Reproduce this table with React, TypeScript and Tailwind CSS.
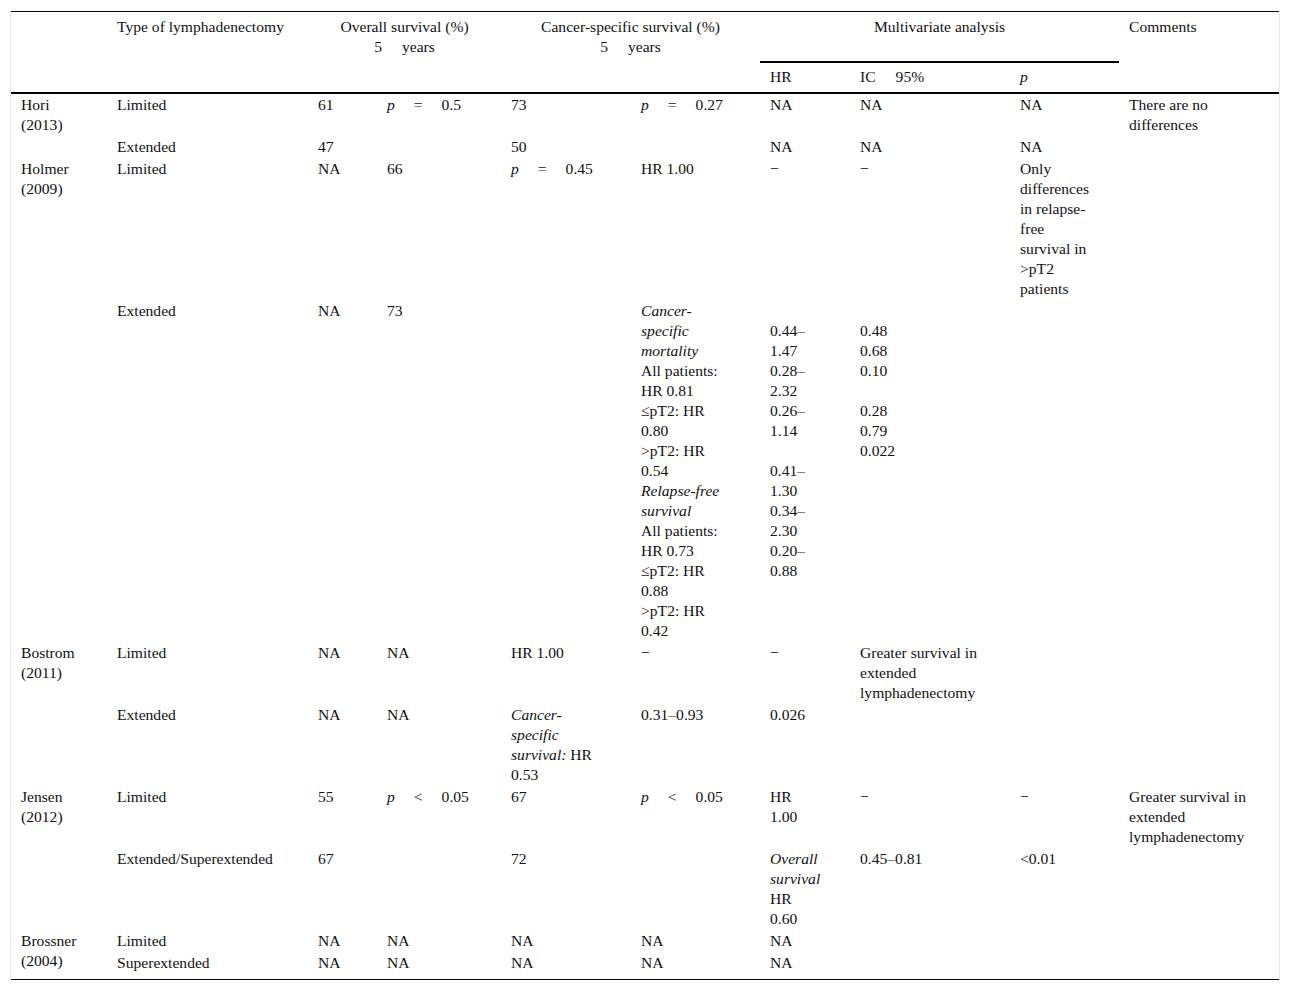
import React from "react";

// p = 0.5 style inline formula, wide spacing like the source
const Eq = ({ op, v }: { op: string; v: string }) => (
  <span className="whitespace-nowrap">
    <i>p</i>
    <span className="ml-[19px]">{op}</span>
    <span className="ml-[19px]">{v}</span>
  </span>
);

const Lines = ({ items }: { items: React.ReactNode[] }) => (
  <>
    {items.map((o, i) => (
      <div key={i} className="h-[20px]">
        {o}
      </div>
    ))}
  </>
);

const td = "align-top px-[10px] py-[1px] whitespace-nowrap";
const tdLast = "align-top px-[10px] pt-[1px] pb-[6px] whitespace-nowrap";
const th1 = "align-top px-[10px] pt-[5px] pb-[4px] font-normal whitespace-nowrap border-b-2 border-black";
const th2 = "align-top text-left px-[10px] pt-[4px] pb-[5px] font-normal whitespace-nowrap border-b-2 border-black";

const Cell = ({ children, last, rowSpan }: { children?: React.ReactNode; last?: boolean; rowSpan?: number }) => (
  <td rowSpan={rowSpan} className={last ? tdLast : td}>
    {children}
  </td>
);

export default function App() {
  return (
    <div className="w-full bg-white pt-[11px] px-[10px] pb-[10px] text-[#111] text-[15.6px] leading-[20px] font-['Liberation_Serif',serif]">
      <div className="border-l border-r border-[#e6e6e6]">
        <table className="w-[1268px] table-fixed border-separate border-spacing-0 border-t border-b border-black">
          <colgroup>
            <col className="w-[96px]" />
            <col className="w-[201px]" />
            <col className="w-[69px]" />
            <col className="w-[124px]" />
            <col className="w-[130px]" />
            <col className="w-[129px]" />
            <col className="w-[90px]" />
            <col className="w-[160px]" />
            <col className="w-[109px]" />
            <col className="w-[160px]" />
          </colgroup>
          <thead>
            <tr>
              <th rowSpan={2} className={th1}></th>
              <th rowSpan={2} className={th1 + " text-left"}>Type of lymphadenectomy</th>
              <th rowSpan={2} colSpan={2} className={th1 + " text-center"}>
                <div>Overall survival (%)</div>
                <div>
                  5<span className="ml-[20px]">years</span>
                </div>
              </th>
              <th rowSpan={2} colSpan={2} className={th1 + " text-center"}>
                <div>Cancer-specific survival (%)</div>
                <div>
                  5<span className="ml-[20px]">years</span>
                </div>
              </th>
              <th colSpan={3} className="align-top text-center px-[10px] pt-[5px] pb-[24px] font-normal whitespace-nowrap border-b-2 border-black">
                Multivariate analysis
              </th>
              <th rowSpan={2} className={th1 + " text-left"}>Comments</th>
            </tr>
            <tr>
              <th className={th2}>HR</th>
              <th className={th2}>
                IC<span className="ml-[20px]">95%</span>
              </th>
              <th className={th2}>
                <i>p</i>
              </th>
            </tr>
          </thead>
          <tbody>
            {/* Hori */}
            <tr>
              <Cell rowSpan={2}><Lines items={["Hori", "(2013)"]} /></Cell>
              <Cell>Limited</Cell>
              <Cell>61</Cell>
              <Cell><Eq op="=" v="0.5" /></Cell>
              <Cell>73</Cell>
              <Cell><Eq op="=" v="0.27" /></Cell>
              <Cell>NA</Cell>
              <Cell>NA</Cell>
              <Cell>NA</Cell>
              <Cell><Lines items={["There are no", "differences"]} /></Cell>
            </tr>
            <tr>
              <Cell>Extended</Cell>
              <Cell>47</Cell>
              <Cell />
              <Cell>50</Cell>
              <Cell />
              <Cell>NA</Cell>
              <Cell>NA</Cell>
              <Cell>NA</Cell>
              <Cell />
            </tr>

            {/* Holmer */}
            <tr>
              <Cell rowSpan={2}><Lines items={["Holmer", "(2009)"]} /></Cell>
              <Cell>Limited</Cell>
              <Cell>NA</Cell>
              <Cell>66</Cell>
              <Cell><Eq op="=" v="0.45" /></Cell>
              <Cell>HR 1.00</Cell>
              <Cell>−</Cell>
              <Cell>−</Cell>
              <Cell>
                <Lines items={["Only", "differences", "in relapse-", "free", "survival in", ">pT2", "patients"]} />
              </Cell>
              <Cell />
            </tr>
            <tr>
              <Cell>Extended</Cell>
              <Cell>NA</Cell>
              <Cell>73</Cell>
              <Cell />
              <Cell>
                <Lines
                  items={[
                    <i>Cancer-</i>,
                    <i>specific</i>,
                    <i>mortality</i>,
                    "All patients:",
                    "HR 0.81",
                    "≤pT2: HR",
                    "0.80",
                    ">pT2: HR",
                    "0.54",
                    <i>Relapse-free</i>,
                    <i>survival</i>,
                    "All patients:",
                    "HR 0.73",
                    "≤pT2: HR",
                    "0.88",
                    ">pT2: HR",
                    "0.42",
                  ]}
                />
              </Cell>
              <Cell>
                <Lines
                  items={["", "0.44–", "1.47", "0.28–", "2.32", "0.26–", "1.14", "", "0.41–", "1.30", "0.34–", "2.30", "0.20–", "0.88"]}
                />
              </Cell>
              <Cell>
                <Lines items={["", "0.48", "0.68", "0.10", "", "0.28", "0.79", "0.022"]} />
              </Cell>
              <Cell />
              <Cell />
            </tr>

            {/* Bostrom */}
            <tr>
              <Cell rowSpan={2}><Lines items={["Bostrom", "(2011)"]} /></Cell>
              <Cell>Limited</Cell>
              <Cell>NA</Cell>
              <Cell>NA</Cell>
              <Cell>HR 1.00</Cell>
              <Cell>−</Cell>
              <Cell>−</Cell>
              <Cell><Lines items={["Greater survival in", "extended", "lymphadenectomy"]} /></Cell>
              <Cell />
              <Cell />
            </tr>
            <tr>
              <Cell>Extended</Cell>
              <Cell>NA</Cell>
              <Cell>NA</Cell>
              <Cell>
                <Lines
                  items={[
                    <i>Cancer-</i>,
                    <i>specific</i>,
                    <>
                      <i>survival:</i> HR
                    </>,
                    "0.53",
                  ]}
                />
              </Cell>
              <Cell>0.31–0.93</Cell>
              <Cell>0.026</Cell>
              <Cell />
              <Cell />
              <Cell />
            </tr>

            {/* Jensen */}
            <tr>
              <Cell rowSpan={2}><Lines items={["Jensen", "(2012)"]} /></Cell>
              <Cell>Limited</Cell>
              <Cell>55</Cell>
              <Cell><Eq op="<" v="0.05" /></Cell>
              <Cell>67</Cell>
              <Cell><Eq op="<" v="0.05" /></Cell>
              <Cell><Lines items={["HR", "1.00"]} /></Cell>
              <Cell>−</Cell>
              <Cell>−</Cell>
              <Cell><Lines items={["Greater survival in", "extended", "lymphadenectomy"]} /></Cell>
            </tr>
            <tr>
              <Cell>Extended/Superextended</Cell>
              <Cell>67</Cell>
              <Cell />
              <Cell>72</Cell>
              <Cell />
              <Cell><Lines items={[<i>Overall</i>, <i>survival</i>, "HR", "0.60"]} /></Cell>
              <Cell>0.45–0.81</Cell>
              <Cell>&lt;0.01</Cell>
              <Cell />
            </tr>

            {/* Brossner */}
            <tr>
              <Cell rowSpan={2} last><Lines items={["Brossner", "(2004)"]} /></Cell>
              <Cell>Limited</Cell>
              <Cell>NA</Cell>
              <Cell>NA</Cell>
              <Cell>NA</Cell>
              <Cell>NA</Cell>
              <Cell>NA</Cell>
              <Cell />
              <Cell />
              <Cell />
            </tr>
            <tr>
              <Cell last>Superextended</Cell>
              <Cell last>NA</Cell>
              <Cell last>NA</Cell>
              <Cell last>NA</Cell>
              <Cell last>NA</Cell>
              <Cell last>NA</Cell>
              <Cell last />
              <Cell last />
              <Cell last />
            </tr>
          </tbody>
        </table>
      </div>
    </div>
  );
}
